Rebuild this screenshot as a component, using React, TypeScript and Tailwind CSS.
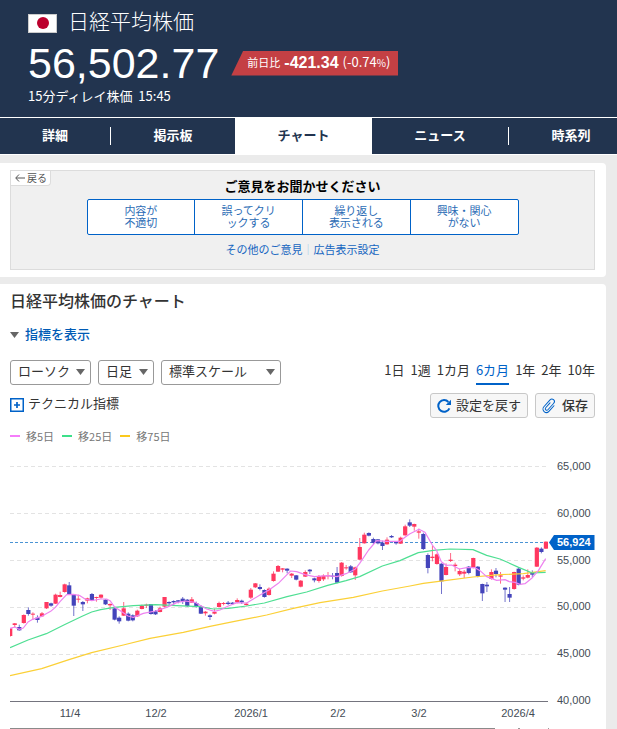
const tabs = [
  { label: '詳細', className: 'w-[111px]', divider: true },
  { label: '掲示板', className: 'w-[124px]' },
  { label: 'チャート', className: 'w-[137px]', active: true },
  { label: 'ニュース', className: 'w-[137px]', divider: true },
  { label: '時系列', className: 'w-[124px]' },
];

const reasons = [
  ['内容が', '不適切'],
  ['誤ってクリ', 'ックする'],
  ['繰り返し', '表示される'],
  ['興味・関心', 'がない'],
];

const ranges = ['1日', '1週', '1カ月', '6カ月', '1年', '2年', '10年'];

const legend = [
  { label: '移5日', className: 'bg-[#f57dfa]' },
  { label: '移25日', className: 'bg-[#3de08a]' },
  { label: '移75日', className: 'bg-[#fbc91d]' },
];

type Candle = ['u' | 'd', number, number, number, number];

// [direction, high, body top, body bottom, low], three units to a pixel
const candles: Candle[] = [
  ['u', 385, 385, 408, 410], ['u', 369, 370, 375, 382], ['d', 374, 381, 391, 392], ['u', 343, 345, 369, 371],
  ['d', 322, 330, 342, 347], ['u', 337, 341, 344, 359], ['d', 346, 353, 360, 368], ['u', 336, 340, 349, 350],
  ['u', 306, 306, 325, 327], ['d', 308, 310, 317, 320], ['u', 281, 284, 311, 312], ['u', 275, 285, 291, 292],
  ['u', 251, 253, 276, 278], ['d', 246, 256, 283, 284], ['d', 284, 284, 317, 348], ['u', 284, 296, 299, 308],
  ['d', 303, 306, 313, 333], ['u', 293, 295, 302, 310], ['d', 279, 282, 301, 303], ['u', 290, 291, 294, 305],
  ['u', 283, 284, 293, 296], ['d', 298, 299, 313, 315], ['u', 310, 312, 316, 330], ['d', 325, 325, 359, 361],
  ['d', 349, 353, 364, 371], ['u', 306, 325, 347, 348], ['d', 337, 341, 362, 364], ['d', 343, 346, 361, 364],
  ['u', 329, 332, 349, 351], ['u', 314, 317, 327, 328], ['u', 311, 314, 317, 324], ['d', 312, 312, 342, 344],
  ['d', 330, 334, 343, 345], ['u', 320, 325, 336, 337], ['u', 291, 291, 320, 322], ['d', 304, 306, 310, 318],
  ['d', 301, 303, 307, 317], ['d', 300, 301, 305, 310], ['d', 291, 296, 304, 312], ['d', 297, 299, 318, 321],
  ['u', 291, 298, 308, 309], ['d', 305, 309, 319, 323], ['d', 315, 320, 341, 342], ['u', 333, 335, 340, 347],
  ['d', 343, 346, 351, 360], ['u', 326, 336, 341, 343], ['u', 305, 309, 321, 323], ['u', 306, 309, 312, 316],
  ['d', 303, 308, 312, 315], ['d', 306, 308, 312, 315], ['u', 295, 300, 307, 310], ['d', 299, 302, 307, 312],
  ['u', 308, 311, 315, 317], ['u', 264, 269, 293, 297], ['u', 249, 250, 262, 264], ['d', 253, 261, 267, 271],
  ['d', 268, 270, 291, 293], ['u', 262, 266, 285, 287], ['u', 214, 221, 243, 245], ['u', 195, 198, 215, 216],
  ['u', 204, 205, 209, 217], ['d', 205, 206, 212, 220], ['u', 219, 221, 227, 234], ['d', 225, 226, 239, 241],
  ['u', 240, 242, 260, 262], ['u', 211, 216, 230, 231], ['d', 207, 209, 214, 222], ['d', 233, 235, 241, 247],
  ['u', 225, 228, 243, 248], ['u', 223, 227, 238, 243], ['u', 216, 226, 229, 238], ['d', 219, 227, 230, 238],
  ['d', 201, 219, 248, 250], ['u', 186, 188, 228, 230], ['u', 195, 202, 205, 209], ['d', 195, 199, 217, 218],
  ['u', 200, 202, 226, 240], ['u', 114, 141, 179, 181], ['u', 98, 104, 130, 131], ['d', 97, 99, 107, 109],
  ['d', 113, 117, 129, 134], ['d', 117, 118, 130, 133], ['d', 122, 128, 138, 150], ['u', 112, 119, 133, 134],
  ['d', 105, 108, 112, 114], ['d', 124, 126, 130, 134], ['u', 110, 113, 131, 132], ['u', 74, 79, 106, 107],
  ['d', 58, 67, 77, 81], ['u', 71, 72, 80, 92], ['u', 86, 94, 98, 116], ['d', 98, 102, 147, 150],
  ['d', 160, 165, 204, 220], ['u', 137, 170, 174, 184], ['u', 160, 163, 192, 194], ['d', 190, 191, 244, 282],
  ['u', 190, 201, 225, 226], ['u', 159, 179, 183, 186], ['u', 188, 194, 198, 214], ['u', 206, 213, 223, 228],
  ['u', 210, 215, 221, 234], ['d', 198, 200, 219, 223], ['u', 173, 174, 203, 205], ['d', 198, 200, 228, 232],
  ['d', 251, 252, 280, 303], ['d', 246, 254, 259, 276], ['u', 208, 216, 237, 239], ['d', 204, 212, 222, 232],
  ['u', 216, 226, 230, 251], ['d', 262, 263, 269, 306], ['d', 261, 282, 293, 306], ['u', 215, 216, 267, 269],
  ['d', 201, 206, 254, 256], ['u', 226, 232, 236, 241], ['u', 208, 225, 233, 235], ['d', 211, 218, 224, 232],
  ['u', 141, 143, 200, 201], ['d', 142, 146, 156, 160], ['u', 124, 125, 146, 147],
];

// Same units as the candles, x measured from the left page edge
const averages = [
  {
    color: '#fbd037',
    points:
      '30,527 125,506 207,479 275,458 370,435 450,415 550,397 630,379 700,365 800,345 880,325 960,308 1060,292 1147,273 1230,258 1270,250 1340,241 1419,231 1500,224 1570,221 1637,212',
  },
  {
    color: '#4fdf93',
    points:
      '30,443 84,420 139,401 193,374 248,348 275,336 302,329 343,322 400,317 466,314 530,317 600,320 640,327 685,325 740,318 793,309 861,290 920,276 983,256 1038,242 1079,230 1147,198 1200,182 1220,173 1255,158 1300,151 1350,147 1419,149 1460,166 1500,177 1556,202 1597,219 1637,217',
  },
  {
    color: '#ee82f0',
    points:
      '30,385 45,381 57,388 70,384 84,366 98,358 125,349 152,334 166,322 180,305 200,284 220,283 240,287 255,297 275,302 302,297 320,297 330,302 343,320 370,338 384,348 400,352 430,340 466,333 500,322 530,308 555,303 585,307 600,316 620,327 643,334 660,330 685,318 711,308 740,309 760,297 780,285 807,270 835,250 861,224 872,213 890,215 915,224 943,230 983,227 1011,230 1038,221 1065,208 1079,190 1106,150 1130,122 1161,124 1200,124 1215,112 1230,101 1257,88 1275,97 1297,135 1310,152 1324,185 1338,196 1355,195 1378,207 1400,203 1425,203 1440,212 1460,230 1490,241 1515,239 1528,245 1545,247 1560,253 1575,251 1597,233 1615,212 1637,176',
  },
];

const priceLabels = ['65,000', '60,000', '55,000', '50,000', '45,000', '40,000'];

const dateLabels = [
  { label: '11/4', x: 60 },
  { label: '12/2', x: 146 },
  { label: '2026/1', x: 241 },
  { label: '2/2', x: 328 },
  { label: '3/2', x: 409 },
  { label: '2026/4', x: 508 },
];

function Header() {
  return (
    <header className="bg-[#22344f] text-white h-[117px] pl-7 pt-2">
      <div className="flex items-center gap-[11px] h-7">
        <span className="flex items-center justify-center mt-[2px] w-[29px] h-[19px] bg-white border border-[#ccc]">
          <span className="w-3 h-3 rounded-full bg-[#bc002d]" />
        </span>
        <h1 className="text-[21px] leading-6 pb-1 font-light">日経平均株価</h1>
      </div>
      <div className="flex items-center gap-3 h-[54px]">
        <span className="font-['Liberation_Sans',sans-serif] text-[43px] leading-[54px]">56,502.77</span>
        <div className="flex items-center gap-1 h-[25px] pl-4 pr-2 bg-[#c44044] [clip-path:polygon(12px_0,100%_0,100%_100%,0_100%)] whitespace-nowrap">
          <span className="text-[11px] leading-5 pb-[2px]">前日比</span>
          <span className="font-['Liberation_Sans',sans-serif] text-base font-bold">-421.34</span>
          <span className="text-[13px] leading-5 pb-[2px]">
            (-0.74<span className="text-[10px]">%</span>)
          </span>
        </div>
      </div>
      <p className="text-[13px] leading-3 whitespace-pre">15分ディレイ株価  15:45</p>
    </header>
  );
}

function TabBar() {
  return (
    <nav className="flex h-[38px] border-y border-white bg-[#22344f] overflow-hidden">
      {tabs.map((tab) => (
        <a
          key={tab.label}
          href="#"
          className={`flex items-center shrink-0 text-[13px] font-bold ${tab.className} ${tab.active ? 'bg-white text-[#22344f]' : 'text-white'}`}
        >
          <span className="grow text-center pb-[2px]">{tab.label}</span>
          {tab.divider && <span className="w-px h-[18px] bg-white" />}
        </a>
      ))}
    </nav>
  );
}

function Feedback() {
  return (
    <section className="mt-2 mr-[11px] pl-[10px] pr-[11px] py-[7px] bg-white rounded-r">
      <div className="relative h-[100px] bg-[#f0f0f0] border border-[#dcdcdc] pt-[6px] text-center">
        <button className="absolute left-0 top-0 flex items-center gap-[2px] h-[15px] pl-1 pr-[3px] pb-px bg-white border-r border-b border-[#dcdcdc] rounded-br-sm text-[10px] leading-none text-[#555]">
          <svg width="10" height="8" viewBox="0 0 10 8" fill="none" stroke="#555">
            <path d="M10 4H1M4 .5 .7 4 4 7.500" />
          </svg>
          戻る
        </button>
        <h2 className="text-[13px] leading-[18px] font-bold text-black">ご意見をお聞かせください</h2>
        <div className="mx-auto mt-1 flex w-[432px] max-w-full h-9 bg-white border border-[#0062c8] rounded-xs divide-x divide-[#0062c8]">
          {reasons.map(([first, second]) => (
            <button key={first} className="flex-1 pb-[2px] text-[11px] leading-3 text-[#2b6cb5]">
              {first}
              <br />
              {second}
            </button>
          ))}
        </div>
        <p className="mt-[6px] text-[11px] leading-4 text-[#1565c0]">
          <a href="#">その他のご意見</a>
          <span className="text-[#9ccbe8]">｜</span>
          <a href="#">広告表示設定</a>
        </p>
      </div>
    </section>
  );
}

function SelectBox({ label, value, className }: { label: string; value: string; className: string }) {
  return (
    <div className={`relative ${className}`}>
      <select
        aria-label={label}
        className="appearance-none block w-full h-[25px] pl-[7px] pb-1 bg-white border border-[#999] rounded-[3px] text-[13px] leading-5 text-[#333]"
      >
        <option>{value}</option>
      </select>
      <svg className="absolute right-[6px] top-[9px] pointer-events-none" width="9" height="6" viewBox="0 0 9 6">
        <path d="M0 0h9L4.500 6z" fill="#666" />
      </svg>
    </div>
  );
}

function Controls() {
  return (
    <>
      <div className="mt-4 flex items-start justify-between">
        <div className="flex gap-[7px]">
          <SelectBox label="チャート種類" value="ローソク" className="w-[81px]" />
          <SelectBox label="足" value="日足" className="w-[56px]" />
          <SelectBox label="スケール" value="標準スケール" className="w-[120px]" />
        </div>
        <div className="flex gap-[6px] text-[13px]">
          {ranges.map((range) => (
            <button
              key={range}
              className={`h-[25px] leading-5 pb-[3px] border-b-2 ${range === '6カ月' ? 'text-[#0062c8] border-[#0062c8]' : 'text-[#333] border-transparent'}`}
            >
              {range}
            </button>
          ))}
        </div>
      </div>
      <div className="mt-2 flex items-start justify-between text-[13px] text-[#333]">
        <button className="flex items-center gap-1 h-5">
          <svg className="mt-1" width="14" height="14" viewBox="0 0 14 14" fill="none" stroke="#0062c8">
            <rect x=".75" y=".75" width="12.500" height="12.500" strokeWidth="1.500" />
            <path d="M7 4v6M4 7h6" strokeWidth="1.700" />
          </svg>
          テクニカル指標
        </button>
        <div className="flex gap-[7px]">
          <button className="flex items-center gap-[5px] h-[25px] px-[6px] bg-[#f7f7f7] border border-[#c8c8c8] rounded-[3px]">
            <svg width="14" height="14" viewBox="0 0 14 14" fill="none">
              <path d="M12.400 9.300A5.800 5.800 0 1 1 11.400 3" stroke="#0062c8" strokeWidth="2" />
              <path d="M14 .8V6H8.800z" fill="#0062c8" />
            </svg>
            <span className="leading-5 pb-[2px]">設定を戻す</span>
          </button>
          <button className="flex items-center gap-[6px] h-[25px] px-[6px] bg-[#f7f7f7] border border-[#c8c8c8] rounded-[3px] font-medium">
            <svg width="14" height="14" viewBox="0 0 14 14" fill="none" stroke="#0062c8" strokeLinecap="round" overflow="visible">
              <path
                d="M10.500 3.500V11a3.400 3.400 0 0 1-6.800 0V1.800a2.500 2.500 0 0 1 5 0V10.500a1.500 1.500 0 0 1-3 0V4"
                transform="rotate(42 7 7)"
              />
            </svg>
            <span className="leading-5 pb-[2px]">保存</span>
          </button>
        </div>
      </div>
      <ul className="mt-[10px] flex gap-2 h-4 text-[11px] leading-4 text-[#777]">
        {legend.map((item) => (
          <li key={item.label} className="flex items-center gap-[6px]">
            <span className={`w-[10px] h-[2px] ${item.className}`} />
            {item.label}
          </li>
        ))}
      </ul>
    </>
  );
}

function Chart() {
  return (
    <svg
      className="mt-2 block w-full font-['Liberation_Sans',sans-serif] text-[11px]"
      viewBox="0 0 585 277"
      fill="#444c55"
      role="img"
      aria-label="日経平均株価"
    >
      {priceLabels.map((label, i) => (
        <g key={label}>
          {i < 5 && (
            <path d={`M0 ${14.5 + i * 47}H538`} stroke="#e3e3e3" strokeDasharray="4 3" />
          )}
          <text x="547" y={18 + i * 46.8}>
            {label}
          </text>
        </g>
      ))}
      <path d="M0 90.500H538" stroke="#4a94d4" strokeDasharray="3 2" />
      {candles.map(([dir, high, top, bottom, low], i) => {
        const x = i * 4.54 + 0.2;
        const color = dir === 'u' ? '#ff3860' : '#4444bb';
        return (
          <g key={i} fill={color}>
            <rect x={x - 0.5} y={48 + high / 3} width="1" height={(low - high) / 3} opacity=".75" />
            <rect x={x - 2.1} y={48 + top / 3} width="4.200" height={(bottom - top) / 3} />
          </g>
        );
      })}
      <g transform="translate(-10 48) scale(.33333)" fill="none" strokeWidth="3.600" strokeLinejoin="round">
        {averages.map((line) => (
          <polyline key={line.color} points={line.points} stroke={line.color} />
        ))}
      </g>
      <path d="M0 249.500H538" stroke="#74747e" />
      <path d="M539 90.500 544 83H584.500V98H544z" fill="#0062c8" />
      <text x="547" y="94" fill="#fff" fontWeight="700">
        56,924
      </text>
      {dateLabels.map(({ label, x }) => (
        <text key={label} x={x} y="265" textAnchor="middle">
          {label}
        </text>
      ))}
      <path d="M0 276.500H485" stroke="#8a8a8a" />
      <path d="M508 276.500h2M538 276.500h1" stroke="#999" />
    </svg>
  );
}

export default function App() {
  return (
    <div className="min-h-screen flex flex-col bg-[#ebebeb] font-['Noto_Sans_CJK_JP',sans-serif] overflow-x-hidden">
      <Header />
      <TabBar />
      <Feedback />
      <main className="grow mt-[7px] mr-[11px] pl-[10px] pr-[11px] pt-2 bg-white rounded-tr">
        <h2 className="text-base leading-4 font-medium text-[#333]">日経平均株価のチャート</h2>
        <button className="mt-4 flex items-center gap-[6px] h-5 text-[13px] font-medium text-[#005bb5]">
          <svg className="mt-[2px]" width="9" height="6" viewBox="0 0 9 6">
            <path d="M0 0h9L4.500 6z" fill="#666" />
          </svg>
          指標を表示
        </button>
        <Controls />
        <Chart />
      </main>
    </div>
  );
}
